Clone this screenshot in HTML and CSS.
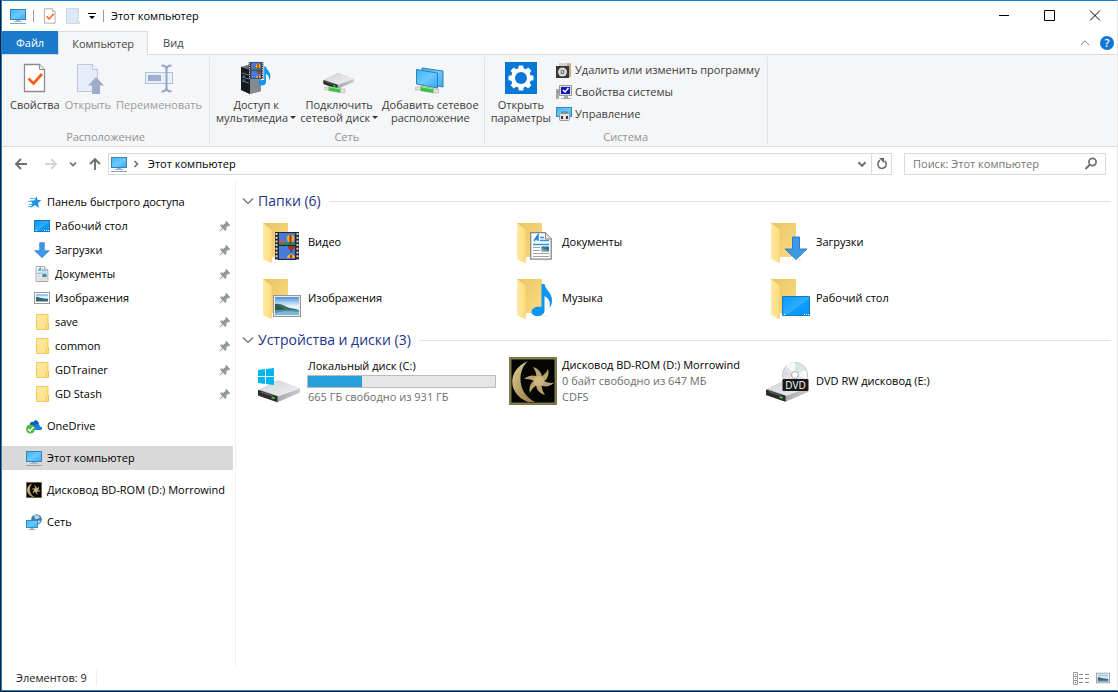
FILE: index.html
```html
<!DOCTYPE html>
<html lang="ru">
<head>
<meta charset="utf-8">
<meta name="viewport" content="width=device-width, initial-scale=1">
<title>Этот компьютер</title>
<link rel="stylesheet" href="styles.css">
</head>
<body>
<svg class="sprite" aria-hidden="true">
  <defs>
    <linearGradient id="screen" x1="0" y1="0" x2="1" y2="1"><stop offset="0" stop-color="#35b4fb"/><stop offset=".5" stop-color="#6cc9ff"/><stop offset="1" stop-color="#36a8f5"/></linearGradient>
    <linearGradient id="desk" x1="0" y1="0" x2="1" y2="1"><stop offset="0" stop-color="#0a97fa"/><stop offset=".55" stop-color="#2faeff"/><stop offset=".56" stop-color="#0f9dff"/><stop offset="1" stop-color="#0690f5"/></linearGradient>
    <linearGradient id="flap" x1="0" y1="0" x2="1" y2="0"><stop offset="0" stop-color="#ffe9a2"/><stop offset="1" stop-color="#fddb7c"/></linearGradient>
    <linearGradient id="fback" x1="0" y1="0" x2="1" y2="1"><stop offset="0" stop-color="#e9c462"/><stop offset="1" stop-color="#fbdc86"/></linearGradient>
    <linearGradient id="metal" x1="0" y1="0" x2="1" y2="1"><stop offset="0" stop-color="#d2d3d6"/><stop offset="1" stop-color="#f1f1f3"/></linearGradient>
    <linearGradient id="side" x1="0" y1="0" x2="1" y2="0"><stop offset="0" stop-color="#8d8f94"/><stop offset="1" stop-color="#c9cacd"/></linearGradient>
    <linearGradient id="sky" x1="0" y1="0" x2="0" y2="1"><stop offset="0" stop-color="#4b8fd8"/><stop offset=".4" stop-color="#c4e2f4"/><stop offset=".5" stop-color="#e8f3f6"/></linearGradient>
    <linearGradient id="gold" x1="0" y1="0" x2="1" y2="1"><stop offset="0" stop-color="#e2cd91"/><stop offset="1" stop-color="#8d7746"/></linearGradient>
    <linearGradient id="small" x1="0" y1="0" x2="1" y2="1"><stop offset="0" stop-color="#ffeaa8"/><stop offset="1" stop-color="#fddc80"/></linearGradient>
    <path id="ray" d="M27 23c1-4 0-9-3-13 6 2 9 6 9 11l-2 4z"/>
  </defs>

  <symbol id="pc" viewBox="0 0 16 16"><rect x=".5" y="1.5" width="15" height="10" fill="url(#screen)" stroke="#3b83b5"/><path d="M6 12h4v1H6z" fill="#8db4cf"/><path d="M4 13h8v1H4z" fill="#9fb9cc"/><path d="M0 15h16v1H0z" fill="#8ba3b8"/></symbol>

  <symbol id="check-page" viewBox="0 0 24 30"><path d="M1.500 1.500h15l5 5v22h-20z" fill="#fff" stroke="#8c8c8c" stroke-width="1.300"/><path d="M16.500 1.500v5h5" fill="#eee" stroke="#8c8c8c"/><path d="M5.500 15.500l5 5L19 11" fill="none" stroke="#f9601b" stroke-width="2.800"/></symbol>

  <symbol id="page-dim" viewBox="0 0 14 16"><path d="M.5.500h12v10h-1v3h2v2h-13z" fill="#dfe8f5" stroke="#cbd6e6"/></symbol>

  <symbol id="star" viewBox="0 0 16 16"><path d="M10.500 2l1 4h4L12 9l1 5-4-3-4.500 3L6.500 9.500 4 6.500h4.500z" fill="#1c94e4"/><path d="M4 4.500h5M2 7.500h4M3 10.500h3M2 12.500h3" stroke="#58b4ee"/></symbol>

  <symbol id="desktop" viewBox="0 0 16 16"><rect x=".5" y="2.500" width="15" height="11" fill="url(#desk)" stroke="#1878bd"/><path d="M2 12.500h1M10 12.500h1M12 12.500h1M14 12.500h1" stroke="#fff"/></symbol>

  <symbol id="down" viewBox="0 0 24 24"><path d="M8.500 1h7v12H23L12 23.500 1 13h7.500z" fill="#3e98e8" stroke="#2d7fca"/></symbol>

  <symbol id="doc" viewBox="0 0 22 28"><path d="M.7.700h14.500l6 6v20.500H.7z" fill="#fdfdfd" stroke="#858585" stroke-width="1.300"/><path d="M15.500 1v6h6" fill="#e6e6e6" stroke="#858585"/><path d="M4 9l4-6v6M5.500 7H8" fill="none" stroke="#1d86cf" stroke-width="1.500"/><path d="M10 5.500h4M10 8.500h9M3 12.500h16" stroke="#2f94db" stroke-width="1.400"/><path d="M3 15.500h7M3 18.500h7M3 21.500h16M3 24.500h16" stroke="#a2a2a2"/><rect x="11.500" y="14.500" width="7.500" height="5" fill="#2e709e"/><path d="M12 19v-3l7 3z" fill="#77a687"/></symbol>

  <symbol id="photo" viewBox="0 0 28 22"><rect x=".6" y=".6" width="26.800" height="20.800" fill="#fff" stroke="#979797" stroke-width="1.200"/><path d="M2 2h24v18H2z" fill="url(#sky)"/><path d="M2 9c5-1 8 1 12 3s7 1 12 3v1H2z" fill="#416f66"/><path d="M2 9c4 0 6 3 9 6H2z" fill="#305a4c"/><path d="M2 15h24v5H2z" fill="#4c90b6"/><path d="M2 18c8-2 14-2 24-1v3H2z" fill="#7cb9d3"/></symbol>

  <symbol id="photo16" viewBox="0 0 16 16"><rect x=".5" y="2.500" width="15" height="11" fill="#fff" stroke="#999"/><path d="M2 4h12v8H2z" fill="#98c7fa"/><path d="M2 6h12v2H2z" fill="#d8ecf9"/><path d="M2 7c4 0 6 2 12 2v3H2z" fill="#3f6765"/><path d="M2 11h12v1H2z" fill="#82b8c4"/></symbol>

  <symbol id="fold16" viewBox="0 0 16 16"><path d="M2.500.500h11.500v9h.5v6h-12z" fill="url(#small)" stroke="#f0cb5c"/><path d="M12.500 15.500v-5l2-1v6z" fill="#ffe698" stroke="#edc44f"/></symbol>

  <symbol id="pin" viewBox="0 0 12 12"><path d="M7 .8L11.200 5l-1.200 1-.9-.2-1.800 1.900.2 2.300-1.200 1-2.300-2.300L.8 11.700.3 11.200l3-3.200L1 5.700l1.100-1.200 2.400.2 2-1.800L6.200 2z" fill="#8e9aa4"/></symbol>

  <symbol id="cloud" viewBox="0 0 16 16"><path d="M4 10V7.500C3 4 6 3 7.500 4c1-3 5-2 5.500 2v4z" fill="#0e5fb5"/><path d="M6 12c-1-3 1-5 3-4.500 1-2.500 5-1.500 5 1 3 .5 2.500 3.500 1 3.500z" fill="#1484db"/><circle cx="4.500" cy="11" r="4.500" fill="#55b848"/><path d="M2 11l2 2 3.500-4" stroke="#fff" stroke-width="1.500" fill="none"/></symbol>

  <symbol id="moon" viewBox="0 0 48 48"><path d="M0 0h48v48H0z" fill="#807848"/><path d="M2.500 2.500h43v43h-43z" fill="#050504"/><path d="M19 4C-1 12-3 36 19 45h7C8 36 8 14 19 4z" fill="url(#gold)"/><g fill="#b9a36b"><use href="#ray"/><use href="#ray" transform="rotate(60 30 24)"/><use href="#ray" transform="rotate(120 30 24)"/><use href="#ray" transform="rotate(180 30 24)"/><use href="#ray" transform="rotate(240 30 24)"/><use href="#ray" transform="rotate(300 30 24)"/></g><circle cx="30" cy="24" r="5" fill="#cdb980"/></symbol>

  <symbol id="network" viewBox="0 0 16 16"><circle cx="10.500" cy="5.500" r="5.300" fill="#387da6"/><path d="M8 1c3-1 6 1 6 3-2 0-3 2-5 1zM11 7c2-1 3 0 4 0-1 2-2 3-4 3z" fill="#a7d7ed"/><rect x=".5" y="6.500" width="11" height="7" fill="url(#screen)" stroke="#3b8abd"/><path d="M5 14h2v1H5zM3 15h6v1H3z" fill="#8ba9bf"/></symbol>

  <symbol id="folder" viewBox="0 0 48 48"><path d="M33 41.500h6l-2-1z" fill="#ddd"/><path d="M8 4h25v34H8z" fill="url(#fback)"/><path d="M8 4l9 7v26l-1 7-8-4z" fill="url(#flap)"/><path d="M17 11v26l-1 7" fill="none" stroke="#f1cc68" stroke-width=".7"/></symbol>

  <symbol id="film" viewBox="0 0 24 28"><path d="M0 0h24v28H0z" fill="#25282b"/><path d="M1.500 1v27M22.500 1v27" stroke="#d7d7d7" stroke-width="2" stroke-dasharray="2 1.700"/><path d="M4 1h16v12H4zM4 14h16v13H4z" fill="#477bdb"/><path d="M4 11l5-1 5 1 6-1v3H4z" fill="#258a57"/><path d="M4 7l4 1 2 3-6-1z" fill="#d34d61"/><circle cx="15.500" cy="6.500" r="3.800" fill="#eeb31d"/><path d="M14.500 3h2v7h-2zM13 14h7c0 3-2 4-3.500 4S13 17 13 14z" fill="#a82e26"/><path d="M12 26c0-5 8-5 8 0z" fill="#e8b82b"/><path d="M15 23h2v3h-2z" fill="#b72f30"/><path d="M14.500 10h2v2h-2zM15.500 18h2v2h-2z" fill="#58491b"/></symbol>

  <symbol id="note" viewBox="0 0 22 34"><path d="M10.500 1h3c1 6 8 9 7.500 17-.2 3-1 5-2.500 7 1-6 0-9-5-12v14c0 4-3 6-7 6-4 0-6-2-6-4 0-4 5-6 10-5z" fill="#0c96f2"/></symbol>

  <symbol id="drive" viewBox="0 0 44 24"><path d="M0 12L19 2h3l21 8v4L20 24 0 17z" fill="url(#side)"/><path d="M1 11L19 2q2-1 4 0l20 8-22 8z" fill="url(#metal)"/><path d="M0 11.500L20 18v6L0 17z" fill="#2c2c2c"/><path d="M3 13.500l12 4" stroke="#686868"/><path d="M14 19l3 1" stroke="#39d53b" stroke-width="2"/></symbol>

  <symbol id="disk-c" viewBox="0 0 48 48"><svg x="3" y="21" width="43" height="25"><use href="#drive"/></svg><path d="M3 13l7-1v7H3zM11 12l8-1v8h-8zM3 20h7v7l-7-1zM11 20h8v8l-8-1z" fill="#00b6f1"/></symbol>

  <symbol id="dvd" viewBox="0 0 48 48"><svg x="3" y="21" width="43" height="24"><use href="#drive"/></svg><circle cx="32" cy="18" r="12.500" fill="#e1e3e4" stroke="#bfc2c4"/><path d="M32 18L23 9q4-4 9-4zM32 18l11-5q2 5 0 9z" fill="#f6f7f7"/><path d="M32 18l3-12 4 2z" fill="#cdebdc"/><path d="M32 18L21 14l-1 4z" fill="#dfd4ea"/><circle cx="32" cy="18" r="3.500" fill="#fff" stroke="#aaa"/><rect x="19.500" y="22" width="26" height="12" rx="1" fill="#191919"/><text x="32.500" y="31.500" text-anchor="middle" class="disc-text">DVD</text></symbol>

  <symbol id="cable" viewBox="0 0 24 10"><path d="M0 3h5l14 2h4v4h-5L5 6H0z" fill="#e4e4e4" stroke="#aaa" stroke-width=".6"/><path d="M5 2l13 2v5L5 7z" fill="#43bd4b"/><path d="M6 3l12 2" stroke="#9fe59e"/></symbol>

  <symbol id="server" viewBox="0 0 32 32"><path d="M1 5l10-3 10 3v24l-11 3-9-4z" fill="#6d7177"/><path d="M1 5l9 3v24l-9-4z" fill="#181b1e"/><path d="M10 8l11-3v24l-11 3z" fill="#858a91"/><path d="M2 11l7 2M2 15l7 2M2 19l7 2" stroke="#667482"/><path d="M3 14h2M3 18h2" stroke="#36a2ef"/><svg x="8" y="0" width="16" height="17"><use href="#film"/></svg><svg x="17" y="4" width="15" height="20"><use href="#note"/></svg></symbol>

  <symbol id="netdrive" viewBox="0 0 32 32"><svg x="0" y="10" width="32" height="17"><use href="#drive"/></svg><svg x="1" y="22" width="22" height="10"><use href="#cable"/></svg></symbol>

  <symbol id="netplace" viewBox="0 0 32 32"><svg x="1" y="22" width="25" height="10"><use href="#cable"/></svg><path d="M8 6l21 3v16L8 21z" fill="url(#screen)" stroke="#347eae"/><path d="M2.500 7.500l21 3.500v15l-21-4z" fill="url(#screen)" stroke="#347eae"/></symbol>

  <symbol id="page-up" viewBox="0 0 32 32"><path d="M5.500 2.500h15l5 5v22h-20z" fill="#e6edf8" stroke="#b9c7dd"/><path d="M20.500 2.500v5h5" fill="#f5f8fc" stroke="#b9c7dd"/><path d="M24 15l8 8.500h-4V32h-8v-8.500h-4z" fill="#9dacc7"/></symbol>

  <symbol id="rename" viewBox="0 0 32 32"><rect x="2.500" y="10.500" width="27" height="11" fill="#e8eff9" stroke="#b0c0da"/><path d="M5 13h13v6H5z" fill="#9fafcc"/><path d="M18.500 3.500q5 0 5 4v18q0 4-5 4M28.500 3.500q-5 0-5 4v18q0 4 5 4" fill="none" stroke="#93a6c5" stroke-width="2"/></symbol>

  <symbol id="gear" viewBox="0 0 32 32"><path d="M0 0h32v32H0z" fill="#0878d7"/><g fill="#fff"><circle cx="16" cy="16" r="10"/><path d="M13.800 3.500h4.400l.8 5h-6zM13.800 28.500h4.400l.8-5h-6z"/><path d="M13.800 3.500h4.400l.8 5h-6zM13.800 28.500h4.400l.8-5h-6z" transform="rotate(45 16 16)"/><path d="M13.800 3.500h4.400l.8 5h-6zM13.800 28.500h4.400l.8-5h-6z" transform="rotate(90 16 16)"/><path d="M13.800 3.500h4.400l.8 5h-6zM13.800 28.500h4.400l.8-5h-6z" transform="rotate(135 16 16)"/></g><circle cx="16" cy="16" r="6" fill="#0878d7"/></symbol>

  <symbol id="uninstall" viewBox="0 0 16 16"><path d="M3 1h12v12H3z" fill="#cfd8ce"/><path d="M11 1l4 1v13h-3z" fill="#c7a889"/><path d="M0 4h13v12H0z" fill="#373737"/><circle cx="6.500" cy="10" r="4.500" fill="#d9d9d9"/><circle cx="6.500" cy="10" r="2" fill="#555"/><circle cx="6.500" cy="10" r="1" fill="#fff"/></symbol>

  <symbol id="sysprops" viewBox="0 0 16 16"><path d="M0 5h3v10H0z" fill="#a9aaa8"/><path d="M1 7h1v2H1z" fill="#35ad49"/><path d="M3.500 1.500h12v10h-12z" fill="#ddd" stroke="#999"/><path d="M5 3h9v7H5z" fill="#1515be"/><path d="M7 6l2 2 3.500-4" stroke="#fff" stroke-width="1.500" fill="none"/><path d="M8 12h4v2h3v1H5v-1h3z" fill="#a5a5a5"/></symbol>

  <symbol id="manage" viewBox="0 0 16 16"><rect x=".5" y="1.500" width="15" height="9" fill="url(#screen)" stroke="#3a87b7"/><path d="M6 8V6h5v2" fill="none" stroke="#666"/><rect x="3.500" y="7.500" width="10" height="7" rx="1" fill="#e1e2e3" stroke="#999"/><path d="M5 10h2v3H5zM10 10h2v3h-2z" fill="#393939"/></symbol>

  <symbol id="chev" viewBox="0 0 12 12"><path d="M1 3.500l5 5 5-5" fill="none" stroke="currentColor" stroke-width="1.200"/></symbol>
  <symbol id="chev-bold" viewBox="0 0 10 10"><path d="M2 3.500l3 3 3-3" fill="none" stroke="currentColor" stroke-width="1.600"/></symbol>
  <symbol id="arrow" viewBox="0 0 14 14"><path d="M13 7H2M7 2L2 7l5 5" fill="none" stroke="currentColor" stroke-width="1.900"/></symbol>
</svg>

<div class="window">
  <header class="titlebar">
    <svg class="i16"><use href="#pc"/></svg>
    <span class="tick"></span>
    <button class="plain" aria-label="Свойства"><svg class="i16"><use href="#check-page"/></svg></button>
    <button class="plain" aria-label="Новая папка"><svg class="i16"><use href="#page-dim"/></svg></button>
    <button class="plain" aria-label="Настройка панели"><svg class="qat-more" viewBox="0 0 8 7"><path d="M0 0h8v1H0zM1 3h6L4 6z"/></svg></button>
    <span class="tick"></span>
    <h1 class="title">Этот компьютер</h1>
    <div class="captions">
      <button class="plain" aria-label="Свернуть"><svg viewBox="0 0 12 12"><path d="M1 5.500h10"/></svg></button>
      <button class="plain" aria-label="Развернуть"><svg viewBox="0 0 12 12"><path d="M.5.500h10v10h-10z"/></svg></button>
      <button class="plain" aria-label="Закрыть"><svg viewBox="0 0 12 12"><path d="M1 .500l10 10M11 .500L1 10.500"/></svg></button>
    </div>
  </header>

  <nav class="tabs">
    <button class="tab tab-file">Файл</button>
    <button class="tab tab-active">Компьютер</button>
    <button class="tab">Вид</button>
    <div class="tab-tools">
      <button class="plain collapse" aria-label="Свернуть ленту"><svg class="i10 flip"><use href="#chev"/></svg></button>
      <button class="plain help" aria-label="Справка">?</button>
    </div>
  </nav>

  <section class="ribbon">
    <div class="group">
      <div class="tools">
        <button class="tool"><svg class="i32" viewBox="0 0 32 32"><use href="#check-page" x="4" y="1" width="24" height="30"/></svg>Свойства</button>
        <button class="tool" disabled><svg class="i32"><use href="#page-up"/></svg>Открыть</button>
        <button class="tool" disabled><svg class="i32"><use href="#rename"/></svg>Переименовать</button>
      </div>
      <div class="group-name">Расположение</div>
    </div>
    <div class="group">
      <div class="tools">
        <button class="tool"><svg class="i32"><use href="#server"/></svg><span>Доступ к<br>мультимедиа<i class="caret"></i></span></button>
        <button class="tool"><svg class="i32"><use href="#netdrive"/></svg><span>Подключить<br>сетевой диск<i class="caret"></i></span></button>
        <button class="tool"><svg class="i32"><use href="#netplace"/></svg><span>Добавить сетевое<br>расположение</span></button>
      </div>
      <div class="group-name">Сеть</div>
    </div>
    <div class="group">
      <div class="tools">
        <button class="tool"><svg class="i32"><use href="#gear"/></svg><span>Открыть<br>параметры</span></button>
        <div class="tool-list">
          <button class="row-tool"><svg class="i16"><use href="#uninstall"/></svg>Удалить или изменить программу</button>
          <button class="row-tool"><svg class="i16"><use href="#sysprops"/></svg>Свойства системы</button>
          <button class="row-tool"><svg class="i16"><use href="#manage"/></svg>Управление</button>
        </div>
      </div>
      <div class="group-name">Система</div>
    </div>
  </section>

  <div class="addressbar">
    <div class="history">
      <button class="plain" aria-label="Назад"><svg class="i14"><use href="#arrow"/></svg></button>
      <button class="plain faint" aria-label="Вперёд"><svg class="i14 flip"><use href="#arrow"/></svg></button>
      <button class="plain" aria-label="Последние"><svg class="i10"><use href="#chev-bold"/></svg></button>
      <button class="plain" aria-label="Вверх"><svg class="i14 turn"><use href="#arrow"/></svg></button>
    </div>
    <div class="path">
      <svg class="i16"><use href="#pc"/></svg>
      <svg class="i10 point-right"><use href="#chev-bold"/></svg>
      <button class="plain crumb">Этот компьютер</button>
      <button class="plain path-drop" aria-label="Журнал"><svg class="i12"><use href="#chev-bold"/></svg></button>
      <button class="plain refresh" aria-label="Обновить"><svg class="i12" viewBox="0 0 12 12"><path d="M8.500 2.800a4.200 4.200 0 1 1-4.500-.3" fill="none" stroke="#666" stroke-width="1.500"/><path d="M3 0h5v5z" fill="#666"/></svg></button>
    </div>
    <div class="search">
      <input type="text" aria-label="Поиск" placeholder="Поиск: Этот компьютер">
      <svg class="i14" viewBox="0 0 14 14"><circle cx="8.500" cy="5" r="3.600" fill="none" stroke="#707070" stroke-width="1.700"/><path d="M6 7.500L1.500 12" stroke="#707070" stroke-width="2"/></svg>
    </div>
  </div>

  <div class="body">
    <aside class="sidebar">
      <a class="item" href="#"><svg class="i16"><use href="#star"/></svg><span>Панель быстрого доступа</span></a>
      <a class="item child" href="#"><svg class="i16"><use href="#desktop"/></svg><span>Рабочий стол</span><svg class="pin"><use href="#pin"/></svg></a>
      <a class="item child" href="#"><svg class="i16"><use href="#down"/></svg><span>Загрузки</span><svg class="pin"><use href="#pin"/></svg></a>
      <a class="item child" href="#"><svg class="i16"><use href="#doc"/></svg><span>Документы</span><svg class="pin"><use href="#pin"/></svg></a>
      <a class="item child" href="#"><svg class="i16"><use href="#photo16"/></svg><span>Изображения</span><svg class="pin"><use href="#pin"/></svg></a>
      <a class="item child" href="#"><svg class="i16"><use href="#fold16"/></svg><span>save</span><svg class="pin"><use href="#pin"/></svg></a>
      <a class="item child" href="#"><svg class="i16"><use href="#fold16"/></svg><span>common</span><svg class="pin"><use href="#pin"/></svg></a>
      <a class="item child" href="#"><svg class="i16"><use href="#fold16"/></svg><span>GDTrainer</span><svg class="pin"><use href="#pin"/></svg></a>
      <a class="item child" href="#"><svg class="i16"><use href="#fold16"/></svg><span>GD Stash</span><svg class="pin"><use href="#pin"/></svg></a>
      <a class="item root" href="#"><svg class="i16"><use href="#cloud"/></svg><span>OneDrive</span></a>
      <a class="item root selected" href="#"><svg class="i16"><use href="#pc"/></svg><span>Этот компьютер</span></a>
      <a class="item root" href="#"><svg class="i16"><use href="#moon"/></svg><span>Дисковод BD-ROM (D:) Morrowind</span></a>
      <a class="item root" href="#"><svg class="i16"><use href="#network"/></svg><span>Сеть</span></a>
    </aside>

    <main class="content">
      <h2 class="heading"><svg class="i12"><use href="#chev"/></svg>Папки (6)</h2>
      <div class="tiles">
        <a class="tile" href="#"><svg class="i48" viewBox="0 -1 48 48"><use href="#folder" width="48" height="48"/><use href="#film" x="20" y="13" width="24" height="28"/></svg><span>Видео</span></a>
        <a class="tile" href="#"><svg class="i48" viewBox="0 -1 48 48"><use href="#folder" width="48" height="48"/><use href="#doc" x="21" y="13" width="22" height="28"/></svg><span>Документы</span></a>
        <a class="tile" href="#"><svg class="i48" viewBox="0 -1 48 48"><use href="#folder" width="48" height="48"/><use href="#down" x="21" y="17" width="24" height="24"/></svg><span>Загрузки</span></a>
        <a class="tile" href="#"><svg class="i48" viewBox="0 -1 48 48"><use href="#folder" width="48" height="48"/><use href="#photo" x="18" y="20" width="28" height="22"/></svg><span>Изображения</span></a>
        <a class="tile" href="#"><svg class="i48" viewBox="0 -1 48 48"><use href="#folder" width="48" height="48"/><use href="#note" x="22" y="8" width="22" height="34"/></svg><span>Музыка</span></a>
        <a class="tile" href="#"><svg class="i48" viewBox="0 -1 48 48"><use href="#folder" width="48" height="48"/><path d="M19.500 21.500h27v19h-27z" fill="url(#desk)" stroke="#1679bf"/><path d="M21 39.500h1M41 39.500h1M43 39.500h1M45 39.500h1" stroke="#fff"/></svg><span>Рабочий стол</span></a>
      </div>
      <h2 class="heading"><svg class="i12"><use href="#chev"/></svg>Устройства и диски (3)</h2>
      <div class="tiles">
        <a class="tile" href="#"><svg class="i48"><use href="#disk-c"/></svg><span class="info">Локальный диск (C:)<span class="meter"><span class="meter-fill" style="width:29%"></span></span><small>665 ГБ свободно из 931 ГБ</small></span></a>
        <a class="tile" href="#"><svg class="i48"><use href="#moon"/></svg><span class="info">Дисковод BD-ROM (D:) Morrowind<small>0 байт свободно из 647 МБ</small><small>CDFS</small></span></a>
        <a class="tile" href="#"><svg class="i48"><use href="#dvd"/></svg><span>DVD RW дисковод (E:)</span></a>
      </div>
    </main>
  </div>

  <footer class="status">
    <span class="count">Элементов: 9</span>
    <div class="views">
      <button class="plain" aria-label="Таблица"><svg class="view-list" viewBox="0 0 17 13"><path d="M.5.500h4v12h-4zM.5 4.500h4M.5 8.500h4" fill="#fff" stroke="#999"/><path d="M2 2.500h1M2 6.500h1" stroke="#777"/><path d="M2 10.500h1" stroke="#c33"/><path d="M6 2.500h4M12 2.500h4M6 6.500h4M12 6.500h4M6 10.500h4M12 10.500h4" stroke="#888"/></svg></button>
      <button class="plain" aria-label="Крупные значки"><svg class="i14"><use href="#photo16"/></svg></button>
    </div>
  </footer>
</div>
</body>
</html>
```

FILE: styles.css
```css
* { box-sizing: border-box; }

body {
  margin: 0;
  padding: 0 0 1px 1px;
  height: 100vh;
  background: #16202c;
  color: #000;
  font: 11px/16px "Open Sans", "Noto Sans", sans-serif;
}

button, input { font: inherit; color: inherit; }
svg { display: block; flex: none; }
a { color: inherit; text-decoration: none; }

.sprite { position: absolute; width: 0; height: 0; }
.disc-text { font: 10px "Open Sans", sans-serif; fill: #fff; }

.i10 { width: 10px; height: 10px; }
.i12 { width: 12px; height: 12px; }
.i14 { width: 14px; height: 14px; }
.i16 { width: 16px; height: 16px; }
.i32 { width: 32px; height: 32px; }
.i48 { width: 48px; height: 48px; }
.flip { transform: rotate(180deg); }
.turn { transform: rotate(90deg); }
.point-right { transform: rotate(-90deg); }

.plain {
  display: flex;
  align-items: center;
  justify-content: center;
  padding: 0;
  border: 0;
  background: none;
}

.window {
  display: flex;
  flex-direction: column;
  min-height: 100%;
  background: #fff;
  border: 1px solid #1b7fd0;
  border-right-color: #e8e8e8;
}

/* Title bar */
.titlebar {
  display: flex;
  align-items: center;
  gap: 7px;
  height: 30px;
  padding-left: 8px;
}
.tick { width: 1px; height: 12px; background: #999; }
.tick + .plain { margin-left: 1px; }
.title { margin: 0; font-size: 11px; font-weight: 400; }
.qat-more { width: 8px; height: 7px; }
.captions { display: flex; height: 30px; margin-left: auto; }
.captions .plain { width: 46px; }
.captions .plain:last-child { width: 44px; }
.captions svg { width: 12px; height: 12px; fill: none; stroke: #000; }

/* Tabs */
.tabs { display: flex; height: 24px; border-bottom: 1px solid #dadbdc; }
.tab {
  height: 23px;
  padding: 0 15px;
  border: 0;
  background: none;
  color: #444;
}
.tab-file { padding: 0 14px; background: #1979ca; color: #fff; }
.tab-active {
  height: 24px;
  padding: 0 13px;
  border: 1px solid #dadbdc;
  border-bottom: 0;
  background: #f5f6f7;
}
.tab-tools { display: flex; align-items: center; gap: 10px; margin-left: auto; padding-right: 3px; }
.collapse { color: #888; }
.help {
  width: 14px;
  height: 14px;
  border-radius: 50%;
  background: #0f78d4;
  color: #fff;
  font-weight: 600;
  line-height: 14px;
}

/* Ribbon */
.ribbon {
  display: flex;
  height: 92px;
  padding: 2px 0 1px;
  background: #f5f6f7;
  border-bottom: 1px solid #dadbdc;
}
.group {
  display: flex;
  flex-direction: column;
  justify-content: space-between;
  padding: 2px 4px 0;
  border-right: 1px solid #e2e3e4;
}
.group:first-child { padding: 2px 6px 0; }
.tools { display: flex; align-items: flex-start; gap: 1px; }
.group:first-child .tools { gap: 2px; }
.tool {
  display: flex;
  flex-direction: column;
  align-items: center;
  gap: 4px;
  padding: 3px 1px 0 2px;
  border: 0;
  background: none;
  color: #3c3c3c;
  line-height: 13px;
  white-space: nowrap;
}
.tool:disabled { color: #9a9a9a; }
.caret {
  display: inline-block;
  margin-left: 2px;
  border: 3px solid transparent;
  border-top-color: #333;
  border-bottom: 0;
  vertical-align: 3px;
}
.tool-list { display: flex; flex-direction: column; }
.row-tool {
  display: flex;
  align-items: center;
  gap: 3px;
  height: 22px;
  padding: 0 3px;
  border: 0;
  background: none;
  color: #3c3c3c;
  white-space: nowrap;
}
.group-name { color: #929292; text-align: center; }

/* Address bar */
.addressbar {
  display: flex;
  align-items: center;
  gap: 12px;
  height: 34px;
  padding: 0 11px 0 12px;
}
.history { display: flex; align-items: center; gap: 10px; color: #6e6e6e; margin-right: -6px; }
.history .plain:first-child { margin-right: 6px; }
.history .faint { color: #d4d4d4; }
.path {
  display: flex;
  align-items: center;
  flex: 1;
  height: 22px;
  padding-left: 2px;
  border: 1px solid #d9d9d9;
  color: #707070;
}
.path .point-right { margin: 0 7px 0 4px; }
.crumb { color: #000; }
.path-drop { margin-left: auto; width: 18px; }
.refresh { align-self: stretch; width: 20px; border-left: 1px solid #d9d9d9; }
.search {
  display: flex;
  align-items: center;
  width: 202px;
  height: 22px;
  padding: 0 7px 0 8px;
  border: 1px solid #d9d9d9;
}
.search input { flex: 1; min-width: 0; padding: 0; border: 0; outline: 0; background: none; }
.search input::placeholder { color: #757575; opacity: 1; }

/* Panes */
.body { display: flex; flex: 1; }
.sidebar {
  width: 234px;
  flex: none;
  padding: 9px 2px 0 0;
  border-right: 1px solid #f0f0f0;
}
.item {
  display: flex;
  align-items: center;
  gap: 5px;
  height: 24px;
  padding-left: 24px;
  white-space: nowrap;
  overflow: hidden;
}
.child { padding: 0 2px 0 32px; }
.root { margin-top: 8px; }
.selected { background: #d9d9d9; }
.pin { width: 12px; height: 12px; margin-left: auto; }

.content { flex: 1; min-width: 0; padding: 8px 6px 0; }
.heading {
  display: flex;
  align-items: center;
  gap: 4px;
  height: 24px;
  margin: 0;
  color: #1e3287;
  font-size: 14px;
  font-weight: 400;
}
.heading svg { color: #6d6d6d; }
.heading::after { content: ""; flex: 1; height: 1px; margin-left: 4px; background: #e2e2e2; }
.tiles {
  display: grid;
  grid-template-columns: repeat(auto-fill, 254px);
  padding: 1px 0 2px 13px;
}
.tile { display: flex; align-items: center; gap: 5px; height: 56px; white-space: nowrap; }
.info { display: flex; flex-direction: column; }
.info small { color: #6d6d6d; font-size: 11px; }
.meter {
  width: 189px;
  height: 13px;
  margin: 1px 0 1px -1px;
  border: 1px solid #bcbcbc;
  background: #e6e6e6;
}
.meter-fill { display: block; height: 100%; background: #26a0da; }

/* Status bar */
.status {
  display: flex;
  align-items: center;
  justify-content: space-between;
  height: 24px;
  padding: 0 7px 0 14px;
}
.count { padding-right: 9px; border-right: 1px solid #eee; color: #222; }
.views { display: flex; gap: 6px; }
.view-list { width: 17px; height: 13px; }
```
